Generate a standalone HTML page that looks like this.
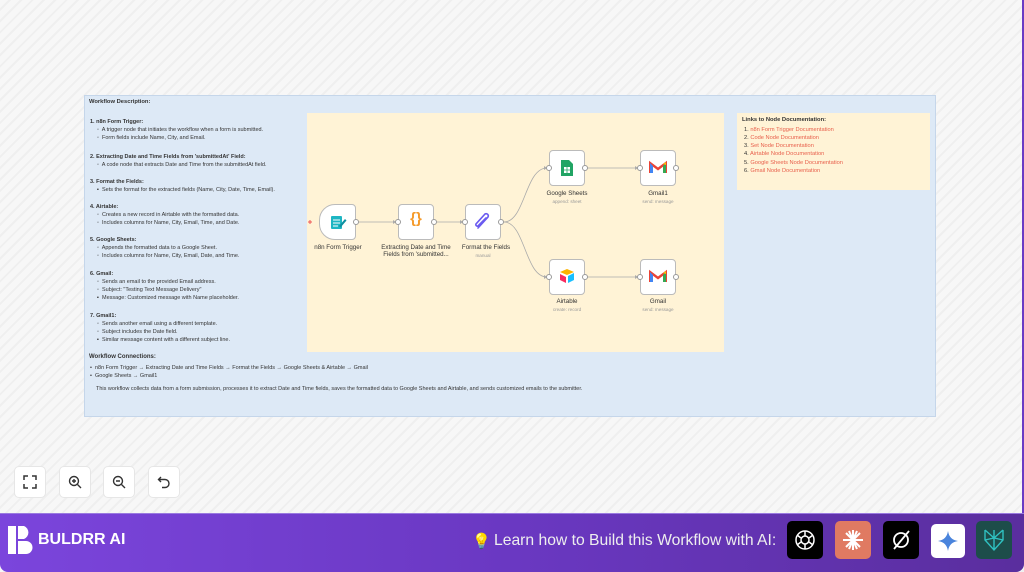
<!DOCTYPE html>
<html><head><meta charset="utf-8"><style>
*{margin:0;padding:0;box-sizing:border-box}
body{width:1024px;height:572px;overflow:hidden;font-family:"Liberation Sans",sans-serif;background:#f6f6f6;position:relative;
background-image:repeating-linear-gradient(135deg,#f7f7f7 0 6px,#efefef 6px 8px)}
.abs{position:absolute}
.note{left:84px;top:95px;width:852px;height:322px;background:#dde9f6;border:1px solid #c5d6ea}
.t{position:absolute;font-size:5.5px;color:#333;white-space:nowrap;line-height:1}
.b{font-weight:bold}
.y1{left:307px;top:113px;width:417px;height:239px;background:#fff3d6}
.y2{left:737px;top:113px;width:193px;height:77px;background:#fff3d6}
.node{position:absolute;width:36px;height:36px;background:#fff;border:1px solid #bbb;border-radius:4px}
.dot{position:absolute;width:6px;height:6px;border:1px solid #999;border-radius:50%;background:#fff}
.lbl{position:absolute;font-size:6.2px;color:#333;text-align:center;width:90px;line-height:1.2}
.sub{position:absolute;font-size:4.6px;color:#999;text-align:center;width:90px}
.btn{position:absolute;top:466px;width:32px;height:32px;background:#fff;border:1px solid #e6e6e6;border-radius:5px;display:flex;align-items:center;justify-content:center}
.bar{left:0;top:513px;width:1024px;height:59px;background:linear-gradient(90deg,#7b45dc,#6a38c2 50%,#5a2e9e);border-top:1px solid #9a7ae0;border-radius:0 0 8px 8px}
.ai{position:absolute;top:521px;width:36px;height:38px;border-radius:5px;display:flex;align-items:center;justify-content:center}
.lk{color:#e8604c}
</style></head><body>
<div class="abs" style="right:0;top:0;width:2px;height:513px;background:#6a3bc4"></div>
<div class="abs note"></div>
<div class="t b" style="left:89px;top:100px;font-size:5.8px">Workflow Description:</div>
<div class="t b" style="left:90px;top:120px">1. n8n Form Trigger:</div>
<div class="t" style="left:97px;top:128px">◦&nbsp; A trigger node that initiates the workflow when a form is submitted.</div>
<div class="t" style="left:97px;top:136px">◦&nbsp; Form fields include Name, City, and Email.</div>
<div class="t b" style="left:90px;top:155px">2. Extracting Date and Time Fields from 'submittedAt' Field:</div>
<div class="t" style="left:97px;top:163px">◦&nbsp; A code node that extracts Date and Time from the submittedAt field.</div>
<div class="t b" style="left:90px;top:180px">3. Format the Fields:</div>
<div class="t" style="left:97px;top:188px">▪&nbsp; Sets the format for the extracted fields (Name, City, Date, Time, Email).</div>
<div class="t b" style="left:90px;top:205px">4. Airtable:</div>
<div class="t" style="left:97px;top:213px">◦&nbsp; Creates a new record in Airtable with the formatted data.</div>
<div class="t" style="left:97px;top:221px">◦&nbsp; Includes columns for Name, City, Email, Time, and Date.</div>
<div class="t b" style="left:90px;top:238px">5. Google Sheets:</div>
<div class="t" style="left:97px;top:246px">◦&nbsp; Appends the formatted data to a Google Sheet.</div>
<div class="t" style="left:97px;top:254px">◦&nbsp; Includes columns for Name, City, Email, Date, and Time.</div>
<div class="t b" style="left:90px;top:272px">6. Gmail:</div>
<div class="t" style="left:97px;top:280px">◦&nbsp; Sends an email to the provided Email address.</div>
<div class="t" style="left:97px;top:288px">◦&nbsp; Subject: "Testing Text Message Delivery"</div>
<div class="t" style="left:97px;top:296px">▪&nbsp; Message: Customized message with Name placeholder.</div>
<div class="t b" style="left:90px;top:314px">7. Gmail1:</div>
<div class="t" style="left:97px;top:322px">◦&nbsp; Sends another email using a different template.</div>
<div class="t" style="left:97px;top:330px">◦&nbsp; Subject includes the Date field.</div>
<div class="t" style="left:97px;top:338px">▪&nbsp; Similar message content with a different subject line.</div>
<div class="t b" style="left:89px;top:354px;font-size:6px">Workflow Connections:</div>
<div class="t" style="left:90px;top:366px">•&nbsp; n8n Form Trigger → Extracting Date and Time Fields → Format the Fields → Google Sheets &amp; Airtable → Gmail</div>
<div class="t" style="left:90px;top:374px">•&nbsp; Google Sheets → Gmail1</div>
<div class="t" style="left:96px;top:387px">This workflow collects data from a form submission, processes it to extract Date and Time fields, saves the formatted data to Google Sheets and Airtable, and sends customized emails to the submitter.</div>

<div class="abs y1"></div>
<div class="abs y2"></div>
<div class="t b" style="left:742px;top:118px;font-size:5.8px">Links to Node Documentation:</div>
<div class="t lk" style="left:744px;top:128px;font-size:5.7px"><span style="color:#333">1.</span> n8n Form Trigger Documentation</div>
<div class="t lk" style="left:744px;top:136px;font-size:5.7px"><span style="color:#333">2.</span> Code Node Documentation</div>
<div class="t lk" style="left:744px;top:144px;font-size:5.7px"><span style="color:#333">3.</span> Set Node Documentation</div>
<div class="t lk" style="left:744px;top:152px;font-size:5.7px"><span style="color:#333">4.</span> Airtable Node Documentation</div>
<div class="t lk" style="left:744px;top:161px;font-size:5.7px"><span style="color:#333">5.</span> Google Sheets Node Documentation</div>
<div class="t lk" style="left:744px;top:169px;font-size:5.7px"><span style="color:#333">6.</span> Gmail Node Documentation</div>

<svg class="abs" style="left:0;top:0" width="1024" height="572">
<g stroke="#aaa" stroke-width="0.8" fill="none">
<path d="M359 222H396"/><path d="M437 222H463"/>
<path d="M504 222C525 222 525 168 547 168"/>
<path d="M504 222C525 222 525 277 547 277"/>
<path d="M588 168H638"/><path d="M588 277H638"/>
</g>
<g fill="#aaa"><path d="M396 222l-3-2v4z"/><path d="M463 222l-3-2v4z"/><path d="M547 168l-3-2v4z"/><path d="M547 277l-3-2v4z"/><path d="M638 168l-3-2v4z"/><path d="M638 277l-3-2v4z"/></g>
<path d="M308 222h4M310 220v4" stroke="#e55" stroke-width="1"/>
</svg>

<div class="node" style="left:319px;top:204px;width:37px;border-radius:16px 4px 4px 16px"></div>
<svg class="abs" style="left:329px;top:213px" width="18" height="18"><rect x="2" y="3" width="11" height="13" rx="1" fill="#1eb6c3"/><path d="M4 7h7M4 10h7M4 13h5" stroke="#fff" stroke-width="1"/><path d="M10 13l6-7 1.5 1.5-6 7z" fill="#0e8fa0"/></svg>
<div class="dot" style="left:353px;top:219px"></div>
<div class="lbl" style="left:293px;top:244px">n8n Form Trigger</div>

<div class="node" style="left:398px;top:204px"></div>
<div class="abs" style="left:398px;top:210px;width:36px;text-align:center;font-size:15px;color:#f59a2a;font-weight:bold">{}</div>
<div class="dot" style="left:395px;top:219px"></div><div class="dot" style="left:431px;top:219px"></div>
<div class="lbl" style="left:378px;top:244px;width:76px">Extracting Date and Time Fields from 'submitted...</div>

<div class="node" style="left:465px;top:204px"></div>
<svg class="abs" style="left:473px;top:212px" width="20" height="20"><path d="M5 16L15 5a2.2 2.2 0 0 0-3-3L3 12a1.5 1.5 0 0 0 2 2l8-8" stroke="#6a5af0" stroke-width="1.6" fill="none" stroke-linecap="round"/></svg>
<div class="dot" style="left:462px;top:219px"></div><div class="dot" style="left:498px;top:219px"></div>
<div class="lbl" style="left:441px;top:244px">Format the Fields</div>
<div class="sub" style="left:438px;top:253px">manual</div>

<div class="node" style="left:549px;top:150px"></div>
<svg class="abs" style="left:560px;top:159px" width="14" height="18"><path d="M1 1h8l4 4v12H1z" fill="#21a464"/><rect x="4" y="8" width="6" height="6" fill="#fff"/><path d="M4 11h6M7 8v6" stroke="#21a464" stroke-width="0.8"/></svg>
<div class="dot" style="left:546px;top:165px"></div><div class="dot" style="left:582px;top:165px"></div>
<div class="lbl" style="left:522px;top:190px">Google Sheets</div>
<div class="sub" style="left:522px;top:199px">append: sheet</div>

<div class="node" style="left:549px;top:259px"></div>
<svg class="abs" style="left:558px;top:268px" width="18" height="16"><path d="M2 4l7-3 7 3-7 3z" fill="#fcb400"/><path d="M10 8l6-3v7l-6 3z" fill="#18bfff"/><path d="M2 6l6 3v6L2 12z" fill="#f82b60"/></svg>
<div class="dot" style="left:546px;top:274px"></div><div class="dot" style="left:582px;top:274px"></div>
<div class="lbl" style="left:522px;top:298px">Airtable</div>
<div class="sub" style="left:522px;top:307px">create: record</div>

<div class="node" style="left:640px;top:150px"></div>
<div class="node" style="left:640px;top:259px"></div>
<svg class="abs" style="left:649px;top:160px" width="18" height="14"><path d="M1 13V3l8 6 8-6v10" fill="none" stroke="#ea4335" stroke-width="2.4"/><path d="M1 3v10h3V6z" fill="#4285f4"/><path d="M17 3v10h-3V6z" fill="#34a853"/><path d="M14 4l3-2v3z" fill="#fbbc04"/></svg>
<svg class="abs" style="left:649px;top:269px" width="18" height="14"><path d="M1 13V3l8 6 8-6v10" fill="none" stroke="#ea4335" stroke-width="2.4"/><path d="M1 3v10h3V6z" fill="#4285f4"/><path d="M17 3v10h-3V6z" fill="#34a853"/><path d="M14 4l3-2v3z" fill="#fbbc04"/></svg>
<div class="dot" style="left:637px;top:165px"></div><div class="dot" style="left:673px;top:165px"></div>
<div class="dot" style="left:637px;top:274px"></div><div class="dot" style="left:673px;top:274px"></div>
<div class="lbl" style="left:613px;top:190px">Gmail1</div><div class="sub" style="left:613px;top:199px">send: message</div>
<div class="lbl" style="left:613px;top:298px">Gmail</div><div class="sub" style="left:613px;top:307px">send: message</div>

<div class="btn" style="left:14px"><svg width="14" height="14" fill="none" stroke="#333" stroke-width="1.5"><path d="M1 5V1h4M9 1h4v4M13 9v4H9M5 13H1V9"/></svg></div>
<div class="btn" style="left:59px"><svg width="14" height="14" fill="none" stroke="#333" stroke-width="1.4"><circle cx="6" cy="6" r="4.5"/><path d="M9.5 9.5L13 13M4 6h4M6 4v4"/></svg></div>
<div class="btn" style="left:103px"><svg width="14" height="14" fill="none" stroke="#333" stroke-width="1.4"><circle cx="6" cy="6" r="4.5"/><path d="M9.5 9.5L13 13M4 6h4"/></svg></div>
<div class="btn" style="left:148px"><svg width="14" height="14" fill="none" stroke="#333" stroke-width="1.4"><path d="M4 2L1.5 4.5 4 7M1.5 4.5H8a4 4 0 0 1 0 8H5"/></svg></div>

<div class="abs bar"></div>
<svg class="abs" style="left:8px;top:526px" width="26" height="28"><path d="M0 0h8v28H0z" fill="#fff"/><path d="M10 0h6a7 7 0 0 1 0 13h-6z" fill="#fff"/><path d="M10 15h8a6.5 6.5 0 0 1 0 13h-8z" fill="#fff"/></svg>
<div class="abs" style="left:38px;top:531px;color:#fff;font-weight:bold;font-size:16px">BULDRR AI</div>
<div class="abs" style="left:472px;top:532px;color:#f5e03a;font-size:15px">💡</div>
<div class="abs" style="left:494px;top:532px;color:#eee;font-size:15.7px">Learn how to Build this Workflow with AI:</div>
<div class="ai" style="left:787px;background:#000"><svg width="24" height="24" fill="none" stroke="#fff" stroke-width="1.5"><circle cx="12" cy="12" r="9"/><circle cx="12" cy="12" r="4"/><path d="M12 3v5M12 16v5M4 7l4 3M16 14l4 3M4 17l4-3M16 10l4-3"/></svg></div>
<div class="ai" style="left:835px;background:#e07a62"><svg width="24" height="24" stroke="#fff" stroke-width="2"><path d="M12 2v20M2 12h20M5 5l14 14M19 5L5 19M8 3l8 18M16 3L8 21"/></svg></div>
<div class="ai" style="left:883px;background:#000"><svg width="24" height="24" fill="none" stroke="#fff" stroke-width="1.8"><circle cx="12" cy="12" r="7"/><path d="M5 21L20 3"/></svg></div>
<div class="ai" style="left:931px;top:524px;width:34px;height:34px;background:#fff"><svg width="20" height="20"><path d="M10 0C11 6 14 9 20 10 14 11 11 14 10 20 9 14 6 11 0 10 6 9 9 6 10 0z" fill="#4a84dc"/></svg></div>
<div class="ai" style="left:976px;background:#1d4d4a"><svg width="26" height="26" fill="none" stroke="#2fc1c1" stroke-width="1.4"><path d="M4 3l9 8 9-8M4 3v10l9 10 9-10V3M4 13l9-2 9 2M13 3v20"/></svg></div>
</body></html>
